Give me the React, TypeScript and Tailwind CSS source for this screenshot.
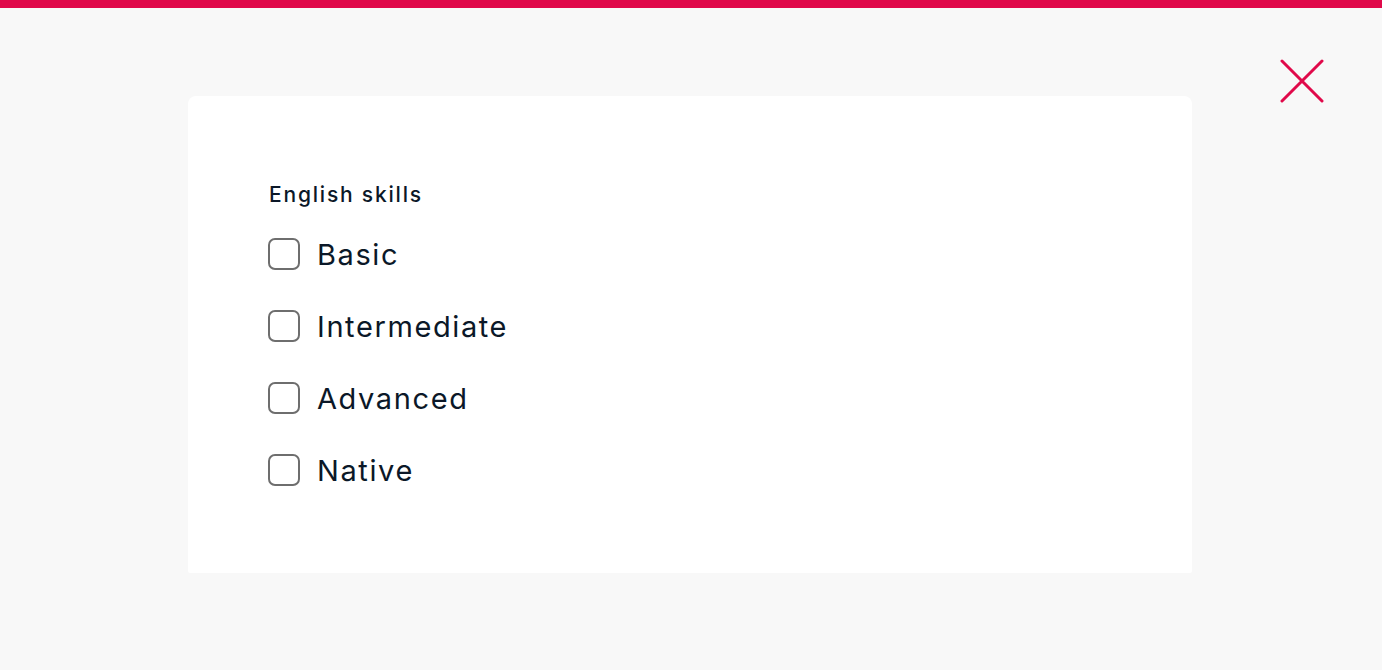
import React from "react";

const options = ["Basic", "Intermediate", "Advanced", "Native"];

export default function App() {
  return (
    <div
      className="min-h-[670px] w-full bg-[#f8f8f8] flex flex-col"
      style={{ fontFamily: "Inter, 'Noto Sans', sans-serif" }}
    >
      <div className="h-2 w-full bg-[#e0094a]" />
      <div className="flex flex-1">
        <div className="w-[188px] shrink-0" />
        <div className="w-[1004px] mt-[88px] h-[477px] bg-white rounded-t-lg rounded-b-[2px] pt-[87px] pl-[81px]">
          <div className="text-[21px] leading-[24px] font-medium text-[#0b1828] tracking-[1.8px]">
            English skills
          </div>
          <div className="mt-[31px] flex flex-col gap-[40px]">
            {options.map((o) => (
              <label key={o} className="flex items-center gap-[17px] h-[32px] -ml-px cursor-pointer">
                <span className="w-[32px] h-[32px] rounded-[7px] border-2 border-[#6e6e6e] bg-white shrink-0" />
                <span className="text-[29px] leading-[32px] pt-[2px] text-[#0b1828] tracking-[1.6px]">{o}</span>
              </label>
            ))}
          </div>
        </div>
        <div className="flex-1 flex justify-end pr-[58px] pt-[51px]">
          <button className="w-[44px] h-[44px]" aria-label="Close">
            <svg width="44" height="44" viewBox="0 0 44 44">
              <path
                d="M2 2 L42 42 M42 2 L2 42"
                stroke="#e0094a"
                strokeWidth="3"
                strokeLinecap="round"
              />
            </svg>
          </button>
        </div>
      </div>
    </div>
  );
}
